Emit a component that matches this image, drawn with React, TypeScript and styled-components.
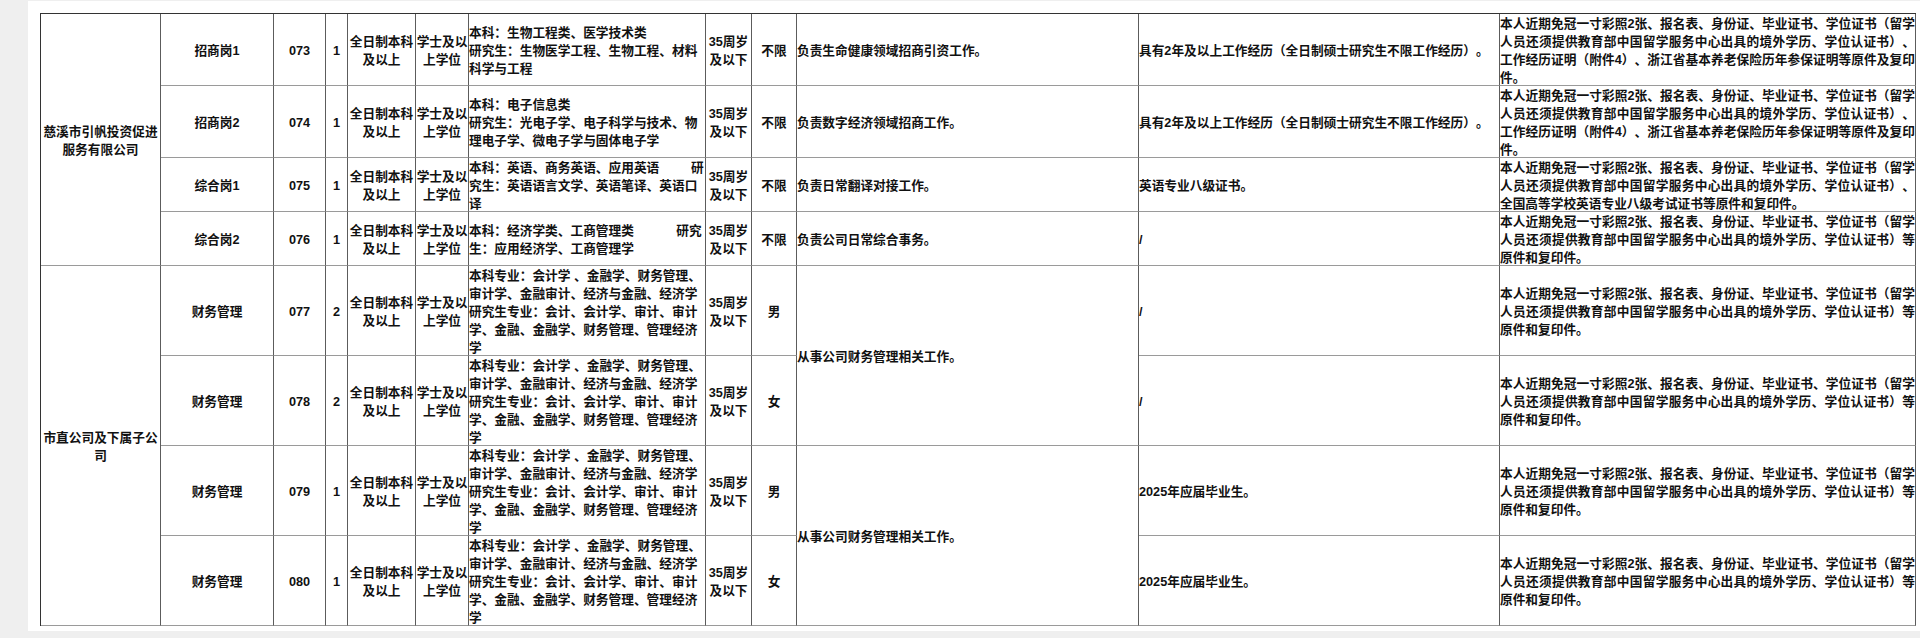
import React from "react";
import styled, { createGlobalStyle } from "styled-components";

const GlobalStyle = createGlobalStyle`
  html, body {
    margin: 0;
    padding: 0;
    background: #efefef;
  }
  body {
    font-family: "Liberation Sans", "Noto Sans CJK SC", sans-serif;
  }
`;

const Page = styled.div`
  box-sizing: border-box;
  min-height: 100vh;
  padding: 1px 0 0 28px;
`;

const Panel = styled.div`
  background: #ffffff;
  padding: 12px 4px 5px 12px;
`;

const Sheet = styled.div`
  display: grid;
  grid-template-columns: 120px 113px 52px 22px 68px 53px 237px 46px 45px 342px 361px 416px;
  grid-template-rows: 72px 72px 54px 54px 90px 90px 90px 90px;
  width: max-content;
  border-top: 1px solid #333333;
  border-left: 1px solid #333333;
  font-family: "Liberation Sans", "Noto Sans CJK SC", sans-serif;
  font-size: 12.7px;
  font-weight: 700;
  line-height: 18px;
  color: #111111;
  text-spacing-trim: space-all;
`;

const Cell = styled.div<{ $align?: "left" | "center"; $rows?: number }>`
  box-sizing: border-box;
  grid-row: span ${(p) => p.$rows ?? 1};
  display: flex;
  align-items: center;
  justify-content: ${(p) => (p.$align === "left" ? "flex-start" : "center")};
  text-align: ${(p) => (p.$align === "left" ? "left" : "center")};
  padding-top: 2px;
  min-width: 0;
  border-right: 1px solid #5c5c5c;
  border-bottom: 1px solid #9a9a9a;
`;

const Text = styled.div<{ $full?: boolean }>`
  width: ${(p) => (p.$full ? "100%" : "auto")};
`;

const Line = styled.span<{ $fill?: boolean }>`
  display: block;
  white-space: ${(p) => (p.$fill ? "nowrap" : "pre")};
  text-align-last: ${(p) => (p.$fill ? "justify" : "auto")};
`;

type Posting = {
  post: string;
  code: string;
  count: string;
  major: string[];
  gender: string;
  duty?: { text: string; rows: number };
  req: string;
  docs: string[];
};

type Group = { company: string[]; postings: Posting[] };

const DOC_HEAD = "本人近期免冠一寸彩照2张、报名表、身份证、毕业证书、学位证书（留学";

const DOCS_WORK = [
  DOC_HEAD,
  "人员还须提供教育部中国留学服务中心出具的境外学历、学位认证书）、",
  "工作经历证明（附件4）、浙江省基本养老保险历年参保证明等原件及复印",
  "件。",
];

const DOCS_ENGLISH = [
  DOC_HEAD,
  "人员还须提供教育部中国留学服务中心出具的境外学历、学位认证书）、",
  "全国高等学校英语专业八级考试证书等原件和复印件。",
];

const DOCS_BASIC = [
  DOC_HEAD,
  "人员还须提供教育部中国留学服务中心出具的境外学历、学位认证书）等",
  "原件和复印件。",
];

const FINANCE_MAJOR = [
  "本科专业：会计学 、金融学、财务管理、",
  "审计学、金融审计、经济与金融、经济学",
  "研究生专业：会计、会计学、审计、审计",
  "学、金融、金融学、财务管理、管理经济",
  "学",
];

const FINANCE_DUTY = "从事公司财务管理相关工作。";

const groups: Group[] = [
  {
    company: ["慈溪市引帆投资促进", "服务有限公司"],
    postings: [
      {
        post: "招商岗1",
        code: "073",
        count: "1",
        major: ["本科：生物工程类、医学技术类", "研究生：生物医学工程、生物工程、材料", "科学与工程"],
        gender: "不限",
        duty: { text: "负责生命健康领域招商引资工作。", rows: 1 },
        req: "具有2年及以上工作经历（全日制硕士研究生不限工作经历）。",
        docs: DOCS_WORK,
      },
      {
        post: "招商岗2",
        code: "074",
        count: "1",
        major: ["本科：电子信息类", "研究生：光电子学、电子科学与技术、物", "理电子学、微电子学与固体电子学"],
        gender: "不限",
        duty: { text: "负责数字经济领域招商工作。", rows: 1 },
        req: "具有2年及以上工作经历（全日制硕士研究生不限工作经历）。",
        docs: DOCS_WORK,
      },
      {
        post: "综合岗1",
        code: "075",
        count: "1",
        major: ["本科：英语、商务英语、应用英语         研", "究生：英语语言文学、英语笔译、英语口", "译"],
        gender: "不限",
        duty: { text: "负责日常翻译对接工作。", rows: 1 },
        req: "英语专业八级证书。",
        docs: DOCS_ENGLISH,
      },
      {
        post: "综合岗2",
        code: "076",
        count: "1",
        major: ["本科：经济学类、工商管理类            研究", "生：应用经济学、工商管理学"],
        gender: "不限",
        duty: { text: "负责公司日常综合事务。", rows: 1 },
        req: "/",
        docs: DOCS_BASIC,
      },
    ],
  },
  {
    company: ["市直公司及下属子公", "司"],
    postings: [
      {
        post: "财务管理",
        code: "077",
        count: "2",
        major: FINANCE_MAJOR,
        gender: "男",
        duty: { text: FINANCE_DUTY, rows: 2 },
        req: "/",
        docs: DOCS_BASIC,
      },
      {
        post: "财务管理",
        code: "078",
        count: "2",
        major: FINANCE_MAJOR,
        gender: "女",
        req: "/",
        docs: DOCS_BASIC,
      },
      {
        post: "财务管理",
        code: "079",
        count: "1",
        major: FINANCE_MAJOR,
        gender: "男",
        duty: { text: FINANCE_DUTY, rows: 2 },
        req: "2025年应届毕业生。",
        docs: DOCS_BASIC,
      },
      {
        post: "财务管理",
        code: "080",
        count: "1",
        major: FINANCE_MAJOR,
        gender: "女",
        req: "2025年应届毕业生。",
        docs: DOCS_BASIC,
      },
    ],
  },
];

const Lines: React.FC<{ lines: string[]; justify?: boolean }> = ({ lines, justify }) => (
  <>
    {lines.map((l, i) => (
      <Line key={i} $fill={justify && i < lines.length - 1}>
        {l}
      </Line>
    ))}
  </>
);

export default function App() {
  return (
    <>
      <GlobalStyle />
      <Page>
        <Panel>
          <Sheet>
            {groups.map((g, gi) =>
              g.postings.map((p, pi) => (
                <React.Fragment key={`${gi}-${pi}`}>
                  {pi === 0 && (
                    <Cell $rows={g.postings.length}>
                      <Text>
                        <Lines lines={g.company} />
                      </Text>
                    </Cell>
                  )}
                  <Cell>{p.post}</Cell>
                  <Cell>{p.code}</Cell>
                  <Cell>{p.count}</Cell>
                  <Cell>
                    <Text>
                      <Lines lines={["全日制本科", "及以上"]} />
                    </Text>
                  </Cell>
                  <Cell>
                    <Text>
                      <Lines lines={["学士及以", "上学位"]} />
                    </Text>
                  </Cell>
                  <Cell $align="left">
                    <Text $full>
                      <Lines lines={p.major} />
                    </Text>
                  </Cell>
                  <Cell>
                    <Text>
                      <Lines lines={["35周岁", "及以下"]} />
                    </Text>
                  </Cell>
                  <Cell>{p.gender}</Cell>
                  {p.duty && (
                    <Cell $align="left" $rows={p.duty.rows}>
                      {p.duty.text}
                    </Cell>
                  )}
                  <Cell $align="left">{p.req}</Cell>
                  <Cell $align="left">
                    <Text $full>
                      <Lines lines={p.docs} justify />
                    </Text>
                  </Cell>
                </React.Fragment>
              ))
            )}
          </Sheet>
        </Panel>
      </Page>
    </>
  );
}
